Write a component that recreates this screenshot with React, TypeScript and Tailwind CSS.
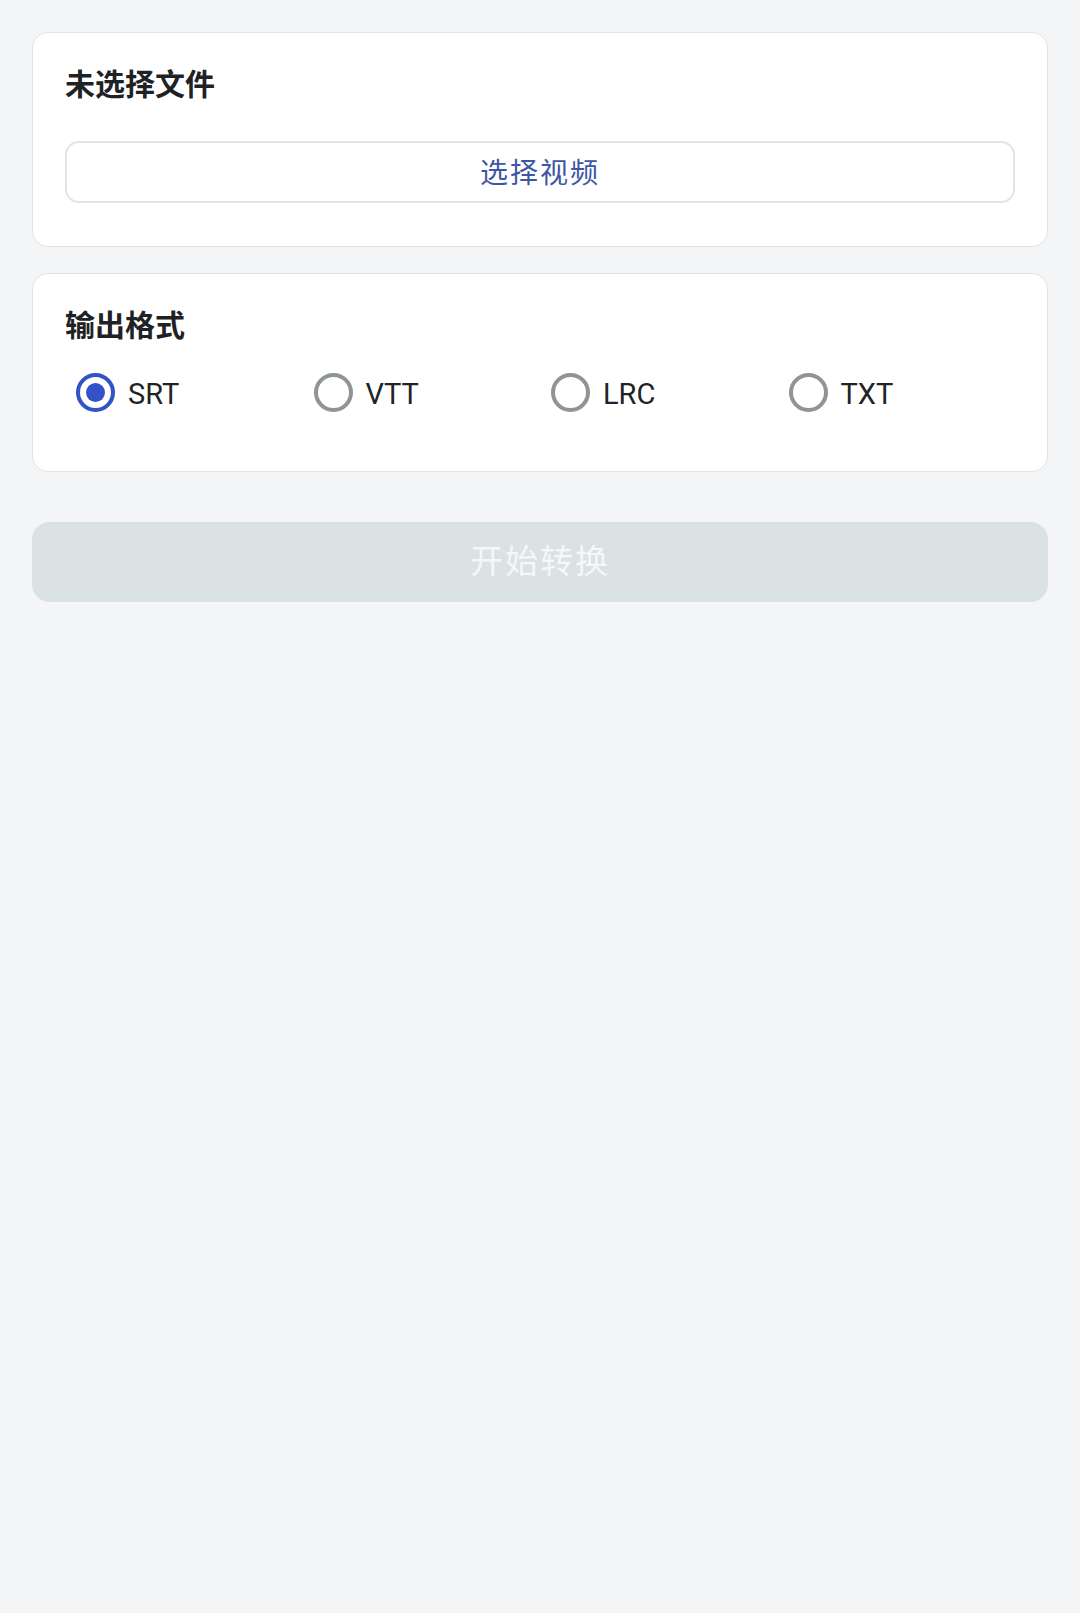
import { useState } from "react";

const formats = ["SRT", "VTT", "LRC", "TXT"] as const;

type Format = (typeof formats)[number];

function Radio({ label, checked, onSelect }: { label: string; checked: boolean; onSelect: () => void }) {
    return (
        <button type="button" onClick={onSelect} className="flex items-center gap-[13px] pl-[11px] text-left">
            <span className={checked ? "flex size-[39px] items-center justify-center rounded-full border-4 border-[#3352c8]" : "flex size-[39px] items-center justify-center rounded-full border-4 border-[#8f9496]"}>
                {checked && <span className="size-[19px] rounded-full bg-[#3352c8]" />}
            </span>
            <span className="translate-y-[2px] text-[29px] leading-[39px] text-[#212325]">{label}</span>
        </button>
    );
}

export default function App() {
    const [format, setFormat] = useState<Format>("SRT");

    return (
        <div className="min-h-screen bg-[#f3f5f7] px-8 pt-8 font-['Roboto','Noto_Sans_CJK_SC',sans-serif]">
            <section className="rounded-[16px] border border-[#e1e4e7] bg-white px-8 pt-8 pb-[43px]">
                <h2 className="text-[30px] leading-[39px] font-semibold text-[#1f2224]">未选择文件</h2>
                <button type="button" className="mt-[37px] flex h-[62px] w-full items-center justify-center rounded-[14px] border-2 border-[#e2e5e8] bg-white pt-[3px] text-[28px] tracking-[2px] text-[#3d56a6]">
                    选择视频
                </button>
            </section>

            <section className="mt-[26px] rounded-[16px] border border-[#e1e4e7] bg-white px-8 pt-8 pb-[59px]">
                <h2 className="text-[30px] leading-[39px] font-semibold text-[#1f2224]">输出格式</h2>
                <div className="mt-[28px] grid grid-cols-4">
                    {formats.map((item) => (
                        <Radio key={item} label={item} checked={format === item} onSelect={() => setFormat(item)} />
                    ))}
                </div>
            </section>

            <button type="button" disabled className="mt-[50px] flex h-[80px] w-full items-center justify-center rounded-[18px] bg-[#dbe2e4] text-[33px] tracking-[2px] text-[#f5f7f8]">
                开始转换
            </button>
        </div>
    );
}
